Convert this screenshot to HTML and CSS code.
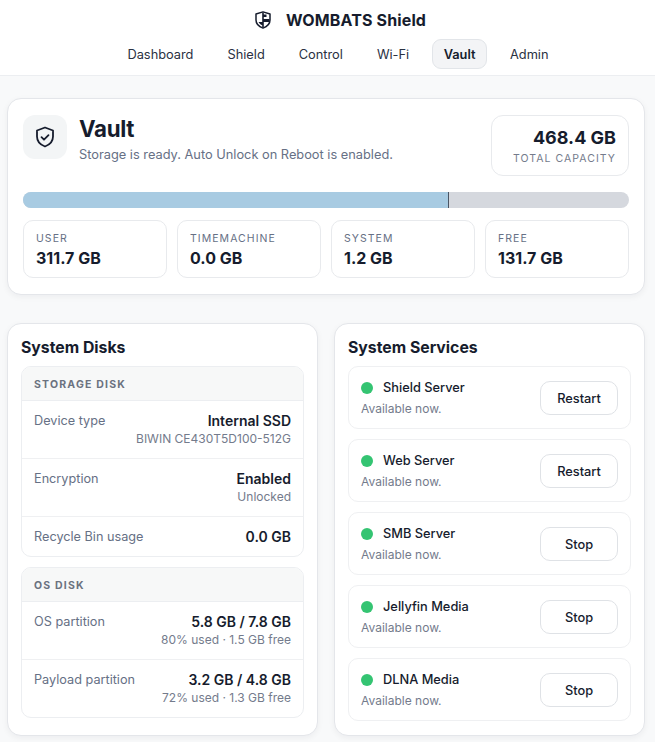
FILE: index.html
```html
<!DOCTYPE html>
<html lang="en">
<head>
<meta charset="utf-8">
<title>WOMBATS Shield</title>
<link rel="stylesheet" href="styles.css">
</head>
<body>
<header class="topbar">
  <div class="brand">
    <svg class="brand-icon" viewBox="0 0 16 18" width="16" height="18" fill="none" stroke="#161c2d" stroke-width="1.500" stroke-linejoin="round"><path d="M8 .9 15 3v6c0 4-2.900 6.600-7 8.100C3.900 15.600 1 13 1 9V3z"/><path fill="#161c2d" stroke="none" d="M7.200 1.500h1.600v15H7.200zM8 8h6.500v3H8zM8 3.500h3.500v2.500H8zM3.500 11h4v3.500l-2.500-1.500z"/></svg>
    <span class="brand-name">WOMBATS Shield</span>
  </div>
  <nav class="nav">
    <a class="nav-item">Dashboard</a>
    <a class="nav-item">Shield</a>
    <a class="nav-item">Control</a>
    <a class="nav-item">Wi-Fi</a>
    <a class="nav-item active">Vault</a>
    <a class="nav-item">Admin</a>
  </nav>
</header>
<main class="page">
  <section class="card hero">
    <div class="hero-top">
      <div class="hero-icon">
        <svg viewBox="0 0 24 24" width="24" height="24" fill="none" stroke="#161c2d" stroke-width="1.800" stroke-linecap="round" stroke-linejoin="round"><path d="M12 2.500 20 5.500v6c0 5-3.400 8.300-8 10-4.600-1.700-8-5-8-10v-6z"/><path d="m8.500 12.200 2.500 2.500 4.500-4.500"/></svg>
      </div>
      <div class="hero-text">
        <h1>Vault</h1>
        <p>Storage is ready. Auto Unlock on Reboot is enabled.</p>
      </div>
      <div class="total">
        <strong>468.4 GB</strong>
        <span>TOTAL CAPACITY</span>
      </div>
    </div>
    <div class="bar"><div class="bar-used"></div></div>
    <div class="stats">
      <div class="stat"><span>USER</span><strong>311.7 GB</strong></div>
      <div class="stat"><span>TIMEMACHINE</span><strong>0.0 GB</strong></div>
      <div class="stat"><span>SYSTEM</span><strong>1.2 GB</strong></div>
      <div class="stat"><span>FREE</span><strong>131.7 GB</strong></div>
    </div>
  </section>
  <div class="columns">
    <section class="card panel">
      <h2>System Disks</h2>
      <div class="group">
        <div class="group-head">STORAGE DISK</div>
        <div class="row"><span class="row-label">Device type</span><div class="row-value"><strong>Internal SSD</strong><small>BIWIN CE430T5D100-512G</small></div></div>
        <div class="row"><span class="row-label">Encryption</span><div class="row-value"><strong>Enabled</strong><small>Unlocked</small></div></div>
        <div class="row"><span class="row-label">Recycle Bin usage</span><div class="row-value"><strong>0.0 GB</strong></div></div>
      </div>
      <div class="group">
        <div class="group-head">OS DISK</div>
        <div class="row"><span class="row-label">OS partition</span><div class="row-value"><strong>5.8 GB / 7.8 GB</strong><small>80% used · 1.5 GB free</small></div></div>
        <div class="row"><span class="row-label">Payload partition</span><div class="row-value"><strong>3.2 GB / 4.8 GB</strong><small>72% used · 1.3 GB free</small></div></div>
      </div>
    </section>
    <section class="card panel">
      <h2>System Services</h2>
      <div class="service"><div class="svc-info"><div class="svc-name"><i class="dot"></i>Shield Server</div><div class="svc-note">Available now.</div></div><button class="btn">Restart</button></div>
      <div class="service"><div class="svc-info"><div class="svc-name"><i class="dot"></i>Web Server</div><div class="svc-note">Available now.</div></div><button class="btn">Restart</button></div>
      <div class="service"><div class="svc-info"><div class="svc-name"><i class="dot"></i>SMB Server</div><div class="svc-note">Available now.</div></div><button class="btn">Stop</button></div>
      <div class="service"><div class="svc-info"><div class="svc-name"><i class="dot"></i>Jellyfin Media</div><div class="svc-note">Available now.</div></div><button class="btn">Stop</button></div>
      <div class="service"><div class="svc-info"><div class="svc-name"><i class="dot"></i>DLNA Media</div><div class="svc-note">Available now.</div></div><button class="btn">Stop</button></div>
    </section>
  </div>
</main>
</body>
</html>
```
FILE: styles.css
```css
* { box-sizing: border-box; }
html, body { margin: 0; padding: 0; }
body {
  background: #f8f9fa;
  color: #161c2d;
  font-family: Inter, "Liberation Sans", sans-serif;
  font-size: 13px;
  height: 742px;
  overflow: hidden;
}
.topbar {
  height: 76px;
  background: #fff;
  border-bottom: 1px solid #eceef1;
  padding-top: 11px;
}
.brand {
  display: flex;
  align-items: center;
  justify-content: center;
  gap: 15px;
  height: 18px;
  padding-left: 26px;
}
.brand-name { font-size: 16px; font-weight: 700; letter-spacing: 0.14px; }
.nav {
  display: flex;
  justify-content: center;
  margin-top: 10px;
  padding-left: 21px;
}
.nav-item {
  display: flex;
  align-items: center;
  height: 30px;
  padding: 0 16px;
  font-size: 12.8px;
  color: #2a3142;
  border: 1px solid transparent;
  border-radius: 9px;
}
.nav-item.active {
  background: #f3f4f6;
  border-color: #e2e5e9;
  font-weight: 600;
  color: #161c2d;
  padding: 0 11px;
  margin: 0 5.500px;
}
.page { padding: 22px 10px 0 7px; }
.card {
  background: #fff;
  border: 1px solid #e4e6ea;
  border-radius: 14px;
  box-shadow: 0 2px 6px rgba(20, 28, 45, 0.05);
}
.hero { height: 197px; padding: 16px 15px; }
.hero-top { display: flex; align-items: flex-start; height: 61px; }
.hero-icon {
  width: 44px;
  height: 44px;
  border-radius: 12px;
  background: #f3f5f6;
  display: flex;
  align-items: center;
  justify-content: center;
  flex: none;
}
.hero-text { flex: 1; margin-left: 12px; }
.hero-text h1 { margin: 0; font-size: 22.300px; line-height: 28px; font-weight: 700; letter-spacing: -0.3px; }
.hero-text p { margin: 4px 0 0; font-size: 12.8px; line-height: 16px; color: #667085; }
.total {
  width: 138px;
  height: 61px;
  border: 1px solid #e8eaed;
  border-radius: 12px;
  padding: 12px 12px 0 0;
  text-align: right;
  display: flex;
  flex-direction: column;
}
.total strong { font-size: 18px; line-height: 20px; font-weight: 700; }
.total span { margin-top: 4px; font-size: 10.5px; line-height: 13px; letter-spacing: 1.050px; color: #747b8c; }
.bar {
  height: 16px;
  margin-top: 16px;
  background-color: #d5d8de;
  border-radius: 8px;
  overflow: hidden;
}
.bar-used {
  width: 70.3%;
  height: 100%;
  background: #a8cbe2;
  border-right: 1px solid #4b5563;
}
.stats { display: grid; grid-template-columns: repeat(4, 1fr); gap: 10px; margin-top: 12px; }
.stat {
  height: 58px;
  border: 1px solid #e8eaed;
  border-radius: 10px;
  padding: 11px 12px 0;
  display: flex;
  flex-direction: column;
}
.stat span { font-size: 10.5px; line-height: 13px; letter-spacing: 1.050px; color: #667085; }
.stat strong { margin-top: 4px; font-size: 16px; line-height: 18px; font-weight: 700; }
.columns { display: grid; grid-template-columns: 1fr 1fr; gap: 16px; margin-top: 28px; }
.panel { height: 413px; padding: 14px 13px 0; }
.panel h2 { margin: 0 0 9px; font-size: 15.800px; line-height: 19px; font-weight: 700; }
.group {
  border: 1px solid #eceef1;
  border-radius: 10px;
  overflow: hidden;
  margin-bottom: 10px;
}
.group-head {
  height: 34px;
  background: #f7f8f8;
  border-bottom: 1px solid #eceef1;
  padding: 1px 12px 0;
  display: flex;
  align-items: center;
  font-size: 10.5px;
  font-weight: 700;
  letter-spacing: 1.200px;
  color: #6b7280;
}
.row {
  display: flex;
  justify-content: space-between;
  align-items: flex-start;
  padding: 11px 12px 10px;
  border-bottom: 1px solid #eff0f2;
}
.row:last-child { border-bottom: 0; }
.row-label { font-size: 12.7px; line-height: 18px; color: #667085; }
.row-value { display: flex; flex-direction: column; align-items: flex-end; }
.row-value strong { font-size: 14px; line-height: 18px; font-weight: 600; }
.row-value small { font-size: 12px; line-height: 18px; color: #747b8c; }
.service {
  display: flex;
  align-items: center;
  justify-content: space-between;
  height: 63px;
  margin-bottom: 10px;
  padding: 0 12px;
  border: 1px solid #eff0f2;
  border-radius: 10px;
}
.svc-name { display: flex; align-items: center; gap: 10px; font-size: 12.8px; line-height: 18px; font-weight: 500; }
.svc-note { margin-top: 4px; font-size: 12px; line-height: 16px; color: #747b8c; }
.dot { width: 12px; height: 12px; border-radius: 50%; background: #34c472; flex: none; }
.btn {
  width: 78px;
  height: 34px;
  margin-top: 1px;
  background: #fff;
  border: 1px solid #dfe2e6;
  border-radius: 10px;
  font-family: inherit;
  font-size: 12.8px;
  font-weight: 500;
  color: #161c2d;
  padding: 0;
}
```
